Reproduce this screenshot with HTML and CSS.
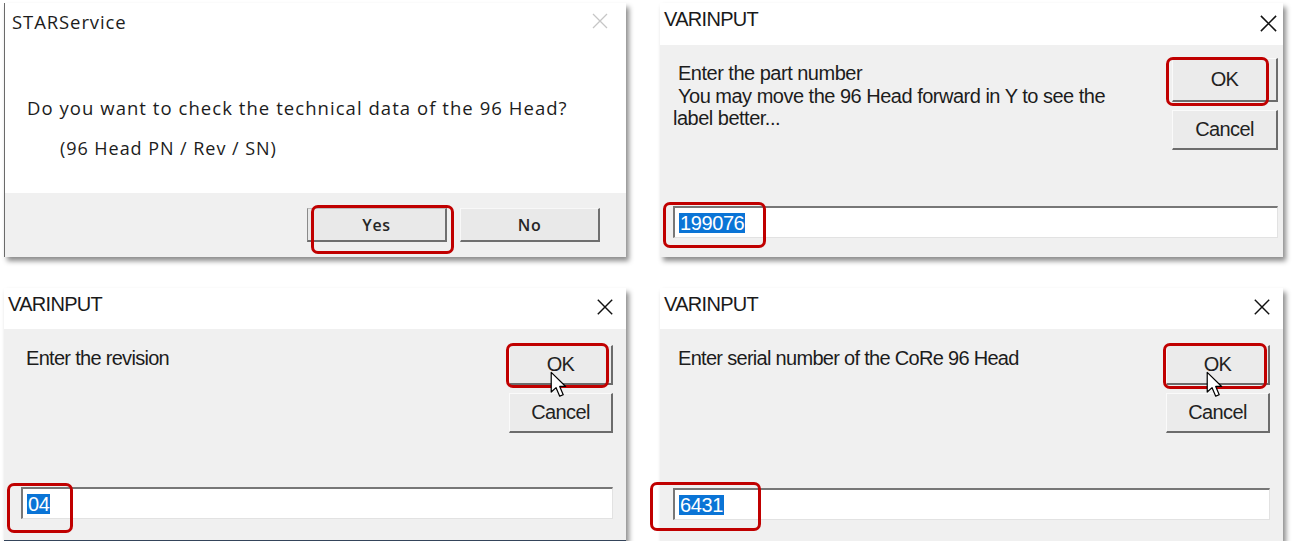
FILE: index.html
```html
<!DOCTYPE html>
<html lang="en">
<head>
<meta charset="utf-8">
<title>96 Head technical data dialogs</title>
<link rel="stylesheet" href="styles.css">
</head>
<body>
<div class="sheet">

  <section class="dlg dlg-msg">
    <header class="titlebar msg-title">
      <span class="title">STARService</span>
      <svg class="x x-light" viewBox="0 0 16 16"><path d="M1 1L15 15M15 1L1 15" stroke="#c6c6c6" stroke-width="1.3" fill="none"/></svg>
    </header>
    <div class="msg-body">
      <p class="q">Do you want to check the technical data of the 96 Head?</p>
      <p class="sub">(96 Head PN / Rev / SN)</p>
    </div>
    <footer class="msg-foot">
      <button class="wbtn wbtn-default">Yes</button>
      <button class="wbtn">No</button>
    </footer>
    <span class="hl hl-yes"></span>
  </section>

  <section class="dlg dlg-var dlg-part">
    <header class="titlebar">
      <span class="title var-title">VARINPUT</span>
      <svg class="x" viewBox="0 0 20 20"><path d="M2 2L18 18M18 2L2 18" stroke="#111" stroke-width="1.6" fill="none"/></svg>
    </header>
    <div class="var-body">
      <div class="var-top">
        <p class="prompt"><span class="line ind">Enter the part number</span><span class="line ind">You may move the 96 Head forward in Y to see the</span><span class="line">label better...</span></p>
        <div class="btns">
          <button class="cbtn cbtn-ok">OK</button>
          <button class="cbtn">Cancel</button>
        </div>
      </div>
      <div class="field"><span class="sel">199076</span></div>
    </div>
    <span class="hl hl-ok-a"></span>
    <span class="hl hl-in-a"></span>
  </section>

  <section class="dlg dlg-var dlg-rev">
    <header class="titlebar">
      <span class="title var-title">VARINPUT</span>
      <svg class="x" viewBox="0 0 20 20"><path d="M2 2L18 18M18 2L2 18" stroke="#111" stroke-width="1.6" fill="none"/></svg>
    </header>
    <div class="var-body">
      <div class="var-top">
        <p class="prompt"><span class="line ind">Enter the revision</span></p>
        <div class="btns">
          <button class="cbtn">OK</button>
          <button class="cbtn">Cancel</button>
        </div>
      </div>
      <div class="field"><span class="sel">04</span></div>
    </div>
    <span class="hl hl-ok-b"></span>
    <span class="hl hl-in-b"></span>
    <svg class="cursor" viewBox="0 0 14 22"><path d="M1 1L1 17.2L5 13.6L8 20.6L10.9 19.4L8 12.6L12.9 12.6Z" fill="#fff" stroke="#000" stroke-width="1" stroke-linejoin="round"/></svg>
  </section>

  <section class="dlg dlg-var dlg-sn">
    <header class="titlebar">
      <span class="title var-title">VARINPUT</span>
      <svg class="x" viewBox="0 0 20 20"><path d="M2 2L18 18M18 2L2 18" stroke="#111" stroke-width="1.6" fill="none"/></svg>
    </header>
    <div class="var-body">
      <div class="var-top">
        <p class="prompt"><span class="line ind">Enter serial number of the CoRe 96 Head</span></p>
        <div class="btns">
          <button class="cbtn">OK</button>
          <button class="cbtn">Cancel</button>
        </div>
      </div>
      <div class="field"><span class="sel">6431</span></div>
    </div>
    <span class="hl hl-ok-c"></span>
    <span class="hl hl-in-c"></span>
    <svg class="cursor" viewBox="0 0 14 22"><path d="M1 1L1 17.2L5 13.6L8 20.6L10.9 19.4L8 12.6L12.9 12.6Z" fill="#fff" stroke="#000" stroke-width="1" stroke-linejoin="round"/></svg>
  </section>

</div>
</body>
</html>
```

FILE: styles.css
```css
html, body {
  margin: 0;
  padding: 0;
  background: #ffffff;
  overflow: hidden;
}

.sheet {
  display: grid;
  grid-template-columns: 622px 623px;
  grid-template-rows: 254px 253px;
  column-gap: 34px;
  row-gap: 31px;
  padding: 3px 0 0 4px;
}

.dlg {
  position: relative;
  display: flex;
  flex-direction: column;
  background: #f0f0f0;
  box-shadow: 3px 4px 5px rgba(0, 0, 0, 0.45);
}

/* ---------- title bars ---------- */
.titlebar {
  height: 42px;
  flex: none;
  background: #ffffff;
  display: flex;
  align-items: flex-start;
  justify-content: space-between;
  box-sizing: border-box;
  padding: 0 12px 0 4px;
}

.title {
  display: block;
  color: #1a1a1a;
}

.var-title {
  font-family: "Liberation Sans", Arial, sans-serif;
  font-size: 20px;
  letter-spacing: -0.7px;
  line-height: 23px;
  margin-top: 5px;
}

.x {
  width: 18px;
  height: 18px;
  margin-top: 10px;
}

/* ---------- message box (STARService) ---------- */
.dlg-msg {
  background: #ffffff;
  border-left: 1px solid #6a6a6a;
}

.msg-title {
  padding: 0 18px 0 7px;
}

.msg-title .title {
  font-family: "Open Sans", "Noto Sans", sans-serif;
  font-size: 18.5px;
  letter-spacing: 0.9px;
  line-height: 24px;
  margin-top: 7px;
  color: #1c1c1c;
}

.x-light {
  width: 16px;
  height: 16px;
  margin-top: 10px;
}

.msg-body {
  flex: 1;
  padding: 51px 0 0 22px;
  font-family: "Open Sans", "Noto Sans", sans-serif;
  font-weight: 500;
  color: #1c1c1c;
}

.q {
  margin: 0;
  font-size: 18.5px;
  letter-spacing: 1.05px;
  line-height: 24px;
}

.sub {
  margin: 16px 0 0 33px;
  font-size: 18px;
  letter-spacing: 0.95px;
  line-height: 24px;
}

.msg-foot {
  height: 64px;
  flex: none;
  background: #f0f0f0;
  display: flex;
  justify-content: flex-end;
  align-items: flex-start;
  gap: 13px;
  padding: 15px 26px 0 0;
  box-sizing: border-box;
}

.wbtn {
  width: 140px;
  height: 34px;
  box-sizing: border-box;
  background: #e9e9e9;
  border-top: 1px solid #f8f8f8;
  border-left: 1px solid #f8f8f8;
  border-right: 2px solid #6f6f6f;
  border-bottom: 2px solid #6f6f6f;
  font-family: "Open Sans", "Noto Sans", sans-serif;
  font-size: 16px;
  font-weight: 600;
  letter-spacing: 0.6px;
  color: #262626;
  padding: 0;
}

.wbtn-default {
  border-left: 1px solid #8a8a8a;
  border-top: 1px solid #bdbdbd;
}

/* ---------- VARINPUT dialogs ---------- */
.var-body {
  flex: 1;
  display: flex;
  flex-direction: column;
  box-sizing: border-box;
  font-family: "Liberation Sans", Arial, sans-serif;
  color: #1c1c1c;
}

.var-top {
  display: flex;
  justify-content: space-between;
  align-items: flex-start;
}

.prompt {
  margin: 0;
  font-size: 20px;
  letter-spacing: -0.7px;
  line-height: 22.5px;
}

.line {
  display: block;
}

.ind {
  padding-left: 5px;
}

.btns {
  display: flex;
  flex-direction: column;
  gap: 8px;
}

.cbtn {
  width: 104px;
  height: 40px;
  box-sizing: border-box;
  background: #ebebeb;
  border-top: 1px solid #fafafa;
  border-left: 1px solid #fafafa;
  border-right: 2px solid #6c6c6c;
  border-bottom: 2px solid #6c6c6c;
  font-family: "Liberation Sans", Arial, sans-serif;
  font-size: 20px;
  letter-spacing: -0.6px;
  color: #222;
  padding: 0;
}

.field {
  margin-top: auto;
  height: 32px;
  box-sizing: border-box;
  background: #ffffff;
  border-top: 2px solid #777777;
  border-left: 2px solid #777777;
  border-right: 1px solid #e2e2e2;
  border-bottom: 1px solid #e2e2e2;
  display: flex;
  align-items: center;
  padding-left: 4px;
}

.sel {
  background: #0a74d6;
  color: #ffffff;
  font-size: 20px;
  line-height: 20px;
  letter-spacing: -0.4px;
  padding: 0 1px;
}

/* per-dialog geometry */
.dlg-part .titlebar {
  padding-right: 5px;
}
.dlg-part .x {
  width: 19px;
  height: 19px;
  margin-top: 11px;
}
.dlg-part .var-body {
  padding: 13px 5px 19px 13px;
}
.dlg-part .prompt {
  margin-top: 4px;
  letter-spacing: -0.5px;
}
.dlg-part .cbtn {
  width: 106px;
}
.dlg-part .cbtn-ok {
  height: 44px;
}

.dlg-rev .titlebar,
.dlg-sn .titlebar {
  height: 41px;
}

.dlg-rev .var-body {
  padding: 16px 13px 21px 17px;
}
.dlg-rev .prompt {
  margin-top: 2px;
}

.dlg-sn .var-body {
  padding: 16px 13px 21px 13px;
}
.dlg-sn .prompt {
  margin-top: 2px;
}

.dlg-rev {
  border-bottom: 1px solid #34445a;
}

/* ---------- red highlight overlays ---------- */
.hl {
  position: absolute;
  box-sizing: border-box;
  border: 3px solid #c00000;
  border-radius: 7px;
  pointer-events: none;
}

.hl-yes { left: 306px; top: 202px; width: 143px; height: 49px; }

.hl-ok-a { left: 506px; top: 54px; width: 103px; height: 49px; }
.hl-in-a { left: 3px; top: 199px; width: 103px; height: 46px; }

.hl-ok-b { left: 502px; top: 55px; width: 103px; height: 45px; }
.hl-in-b { left: 3px; top: 195px; width: 66px; height: 50px; }

.hl-ok-c { left: 503px; top: 55px; width: 104px; height: 46px; }
.hl-in-c { left: -10px; top: 194px; width: 111px; height: 49px; }

/* ---------- mouse pointer ---------- */
.cursor {
  position: absolute;
  left: 546px;
  top: 83px;
  width: 17px;
  height: 27px;
}
```
